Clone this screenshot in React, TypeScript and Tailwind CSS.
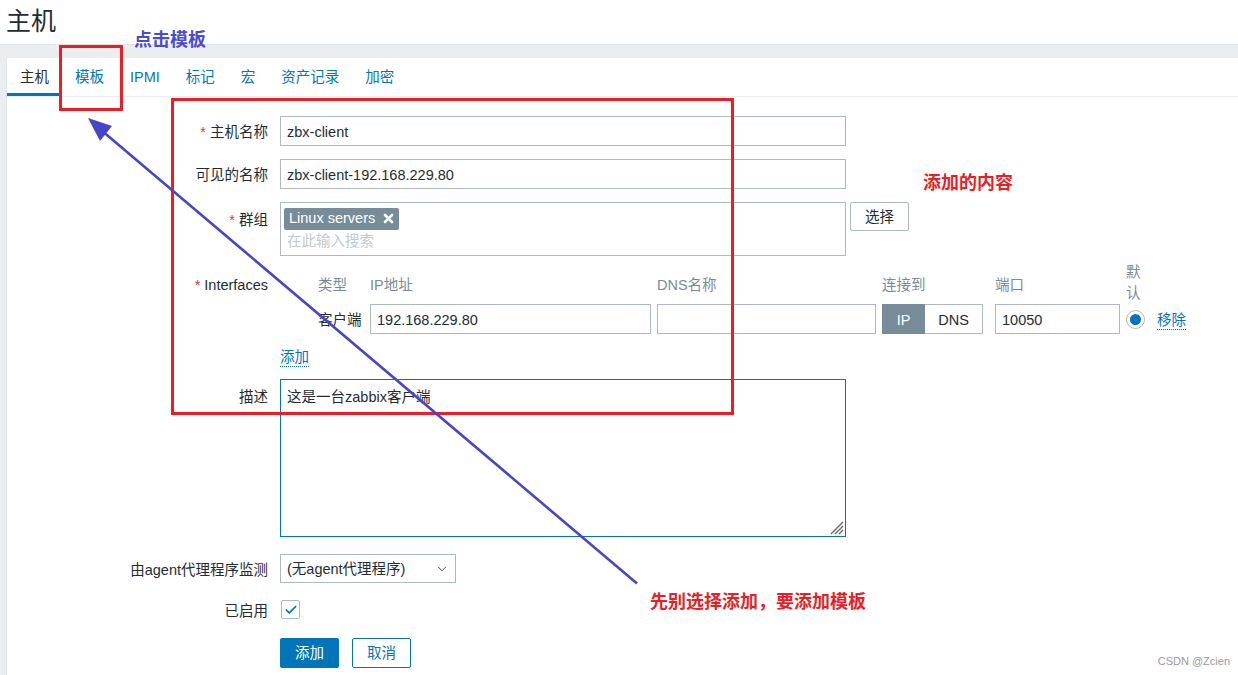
import { ChevronDown, Check } from "lucide-react";

const font = { fontFamily: '"Liberation Sans", Arial, "Noto Sans CJK SC", sans-serif' };

function Label({ text, req }: { text: string; req?: boolean }) {
  return (
    <div className="w-[261px] shrink-0 text-right text-[14.5px] text-[#1f2c33] pt-[4px]">
      {req && <span className="text-[#e33734] mr-[4px]">*</span>}
      {text}
    </div>
  );
}

function Input({ value, w }: { value: string; w: string }) {
  return (
    <div className={`${w} h-[30px] border border-[#acbbc2] bg-white px-[6px] pt-[3px] flex items-center text-[14.5px] text-[#1f2c33]`}>
      {value}
    </div>
  );
}

export default function App() {
  const tabs = ["主机", "模板", "IPMI", "标记", "宏", "资产记录", "加密"];
  return (
    <div className="relative w-[1238px] h-[675px] overflow-hidden bg-white" style={font}>
      <div className="h-[44px] px-[6px] flex items-center text-[25px] text-[#1f2c33]">主机</div>
      <div className="h-[631px] bg-[#ebeef0] border-t border-[#dfe4e7] pt-[13px] pl-[6px]">
        <div className="h-full bg-white border-l border-[#dfe4e7]">
          {/* tabs */}
          <div className="h-[39px] flex border-b border-[#ebeef0]">
            {tabs.map((t, i) => (
              <div
                key={t}
                className={`px-[13px] flex items-center text-[14.5px] pt-[5px] ${
                  i === 0 ? "text-[#1f2c33] border-b-[3px] border-[#0275b8]" : "text-[#0275b8] border-b-[3px] border-transparent"
                }`}
              >
                {t}
              </div>
            ))}
          </div>

          {/* form */}
          <div className="pt-[19px] flex flex-col">
            <div className="flex items-center gap-[12px]">
              <Label text="主机名称" req />
              <Input value="zbx-client" w="w-[566px]" />
            </div>
            <div className="flex items-center gap-[12px] mt-[13px]">
              <Label text="可见的名称" />
              <Input value="zbx-client-192.168.229.80" w="w-[566px]" />
            </div>
            <div className="flex items-start gap-[12px] mt-[13px]">
              <div className="pt-[4px]">
                <Label text="群组" req />
              </div>
              <div className="w-[566px] h-[54px] border border-[#acbbc2] px-[3px] pt-[3px]">
                <div className="inline-flex items-center h-[22px] bg-[#768d99] text-white text-[14.5px] rounded-[2px] px-[5px] gap-[8px]">
                  Linux servers
                  <svg width="11" height="11" viewBox="0 0 11 11">
                    <path d="M2 2 L9 9 M9 2 L2 9" stroke="white" strokeWidth="2.6" strokeLinecap="round" />
                  </svg>
                </div>
                <div className="text-[14.5px] text-[#c2c9ce] pl-[3px] mt-[1px]">在此输入搜索</div>
              </div>
              <div className="-ml-[8px] w-[59px] h-[29px] border border-[#acbbc2] rounded-[2px] pt-[3px] flex items-center justify-center text-[14.5px] text-[#1f2c33]">
                选择
              </div>
            </div>

            {/* interfaces */}
            <div className="flex items-center gap-[12px] mt-[13px] h-[30px]">
              <Label text="Interfaces" req />
              <div className="flex items-center h-[30px] pt-[3px] text-[14.5px] text-[#768d99]">
                <div className="w-[38px]" />
                <div className="w-[52px]">类型</div>
                <div className="w-[287px]">IP地址</div>
                <div className="w-[225px]">DNS名称</div>
                <div className="w-[113px]">连接到</div>
                <div className="w-[131px]">端口</div>
                <div className="w-[16px] leading-[21px] -mt-[6px]">默认</div>
              </div>
            </div>
            <div className="flex items-center mt-[5px] h-[30px]">
              <div className="w-[311px] shrink-0" />
              <div className="w-[52px] pt-[3px] text-[14.5px] text-[#1f2c33]">客户端</div>
              <Input value="192.168.229.80" w="w-[281px]" />
              <div className="w-[6px]" />
              <Input value="" w="w-[219px]" />
              <div className="w-[6px]" />
              <div className="flex h-[30px] w-[101px] border border-[#acbbc2] text-[14.5px]">
                <div className="w-[43px] bg-[#768d99] text-white flex items-center justify-center pt-[3px] -my-px -ml-px">IP</div>
                <div className="flex-1 flex items-center justify-center pt-[3px] text-[#1f2c33]">DNS</div>
              </div>
              <div className="w-[12px]" />
              <Input value="10050" w="w-[125px]" />
              <div className="w-[6px]" />
              <div className="w-[19px] h-[19px] rounded-full border border-[#acbbc2] flex items-center justify-center">
                <div className="w-[11px] h-[11px] rounded-full bg-[#0275b8]" />
              </div>
              <div className="ml-[12px] mt-[3px] text-[14.5px] text-[#0275b8] border-b border-dotted border-[#0275b8] leading-[18px]">移除</div>
            </div>
            <div className="flex mt-[11px] h-[22px] items-center">
              <div className="w-[273px] shrink-0" />
              <div className="mt-[3px] text-[14.5px] text-[#0275b8] border-b border-dotted border-[#0275b8] leading-[18px]">添加</div>
            </div>

            <div className="flex items-start gap-[12px] mt-[12px]">
              <div className="pt-[4px]">
                <Label text="描述" />
              </div>
              <div className="relative w-[566px] h-[158px] border border-[#0275b8] px-[6px] pt-[7px] text-[14.5px] text-[#1f2c33]">
                这是一台zabbix客户端
                <svg className="absolute right-[1px] bottom-[1px]" width="16" height="16" viewBox="0 0 16 16">
                  <path d="M15 3 L3 15 M15 7 L7 15 M15 11 L11 15" stroke="#6b6b6b" strokeWidth="1.4" />
                </svg>
              </div>
            </div>

            <div className="flex items-center gap-[12px] mt-[17px]">
              <Label text="由agent代理程序监测" />
              <div className="w-[176px] h-[29px] border border-[#acbbc2] px-[6px] pt-[3px] flex items-center justify-between text-[14.5px] text-[#1f2c33]">
                (无agent代理程序)
                <ChevronDown size={14} strokeWidth={1.5} className="text-[#1f2c33] -mt-[3px]" />
              </div>
            </div>

            <div className="flex items-center gap-[12px] mt-[14px]">
              <Label text="已启用" />
              <div className="ml-[1px] w-[19px] h-[19px] border border-[#acbbc2] rounded-[2px] flex items-center justify-center">
                <Check size={14} strokeWidth={3} className="text-[#0275b8]" />
              </div>
            </div>

            <div className="flex items-center gap-[13px] mt-[15px] pl-[273px]">
              <div className="w-[59px] h-[30px] bg-[#0275b8] rounded-[2px] pt-[3px] flex items-center justify-center text-[14.5px] text-white">添加</div>
              <div className="w-[59px] h-[30px] border border-[#0275b8] rounded-[2px] pt-[3px] flex items-center justify-center text-[14.5px] text-[#0275b8]">取消</div>
            </div>
          </div>
        </div>
      </div>

      {/* annotations */}
      <div className="absolute left-[134px] top-[27px] text-[18px] font-bold text-[#4b4bd0]">点击模板</div>
      <div className="absolute left-[59px] top-[45px] w-[64px] h-[66px] border-[3px] border-[#ee1c25]" />
      <div className="absolute left-[171px] top-[98px] w-[563px] h-[317px] border-[3px] border-[#ee1c25]" />
      <div className="absolute left-[923px] top-[170px] text-[18px] font-bold text-[#ee1c25]">添加的内容</div>
      <div className="absolute left-[650px] top-[589px] text-[18px] font-bold text-[#ee1c25]">先别选择添加，要添加模板</div>
      <svg className="absolute left-0 top-0 pointer-events-none" width="1238" height="675">
        <line x1="101" y1="130" x2="637" y2="583.5" stroke="#4646c8" strokeWidth="2.6" />
        <polygon points="88,118 112,126 100,141" fill="#4646c8" />
      </svg>
      <div className="absolute right-[8px] bottom-[6px] text-[11px] text-[#9a9a9a]">CSDN @Zcien</div>
    </div>
  );
}
